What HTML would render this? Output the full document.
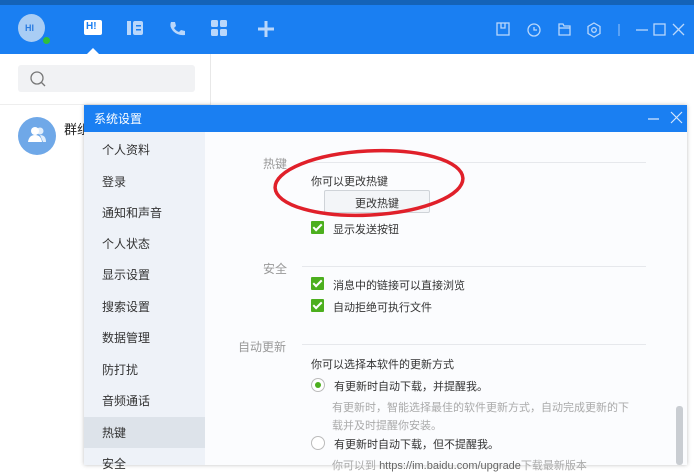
<!DOCTYPE html><html><head><meta charset="utf-8"><style>
*{margin:0;padding:0;box-sizing:border-box}
body{width:694px;height:465px;overflow:hidden;position:relative;background:#fff;font-family:"Liberation Sans","Noto Sans CJK SC",sans-serif;font-size:12px;color:#333}
.a{position:absolute}
.t{position:absolute;white-space:nowrap}
.c .t{font-size:11px}
.side div{position:absolute;left:18px;font-size:12px;color:#333}
.cb{position:absolute;width:13px;height:13px;background:#4caf1e;border-radius:1px}
.cb:after{content:"";position:absolute;left:4px;top:1px;width:3px;height:7px;border:solid #fff;border-width:0 2px 2px 0;transform:rotate(45deg)}
.sec{position:absolute;color:#999;font-size:12px}
.ln{position:absolute;height:1px;background:#e6e8ec}
</style></head><body>
<div class="a" style="left:0;top:0;width:694px;height:5px;background:#1463b8"></div>
<div class="a" style="left:0;top:5px;width:694px;height:49px;background:#1a7ff2"></div>
<div class="a" style="left:18px;top:14px;width:27px;height:28px;border-radius:50%;background:#a9cdf4"></div>
<div class="t" style="left:25px;top:23px;font-size:9px;font-weight:bold;color:#2a7be0">HI</div>
<div class="a" style="left:42px;top:36px;width:9px;height:9px;border-radius:50%;background:#2fbf3a;border:1.5px solid #1a7ff2"></div>
<div class="a" style="left:84px;top:20px;width:18px;height:15px;background:#fff;border-radius:2px"></div>
<div class="t" style="left:86px;top:21px;font-size:10px;font-weight:bold;color:#1a7ff2">H!</div>
<div class="a" style="left:87px;top:42px;width:0;height:0;border:6px solid transparent;border-bottom-color:#fff"></div>
<svg class="a" style="left:126px;top:20px" width="18" height="16"><rect x="1" y="1" width="4" height="14" fill="#b9d7fb"/><rect x="7" y="1" width="10" height="14" rx="2" fill="#b9d7fb"/><rect x="10" y="5" width="5" height="1.5" fill="#1a7ff2"/><rect x="10" y="9" width="5" height="1.5" fill="#1a7ff2"/></svg>
<svg class="a" style="left:168px;top:20px" width="18" height="18"><path d="M3 2 L7 2 L8 6 L6 8 Q8 11 11 12 L13 10 L17 11 L17 15 Q10 16 5 11 Q1 6 3 2Z" fill="#b9d7fb"/></svg>
<svg class="a" style="left:211px;top:20px" width="17" height="17"><rect x="0" y="0" width="7" height="7" rx="1.5" fill="#b9d7fb"/><rect x="9" y="0" width="7" height="7" rx="1.5" fill="#b9d7fb"/><rect x="0" y="9" width="7" height="7" rx="1.5" fill="#b9d7fb"/><rect x="9" y="9" width="7" height="7" rx="1.5" fill="#b9d7fb"/></svg>
<svg class="a" style="left:258px;top:21px" width="16" height="16"><rect x="6.5" y="0" width="3" height="16" fill="#b9d7fb"/><rect x="0" y="6.5" width="16" height="3" fill="#b9d7fb"/></svg>
<svg class="a" style="left:496px;top:22px" width="190" height="16" fill="none" stroke="#b9d7fb" stroke-width="1.3">
<rect x="1" y="1" width="12" height="12"/><path d="M5 1v5h4V1"/>
<circle cx="38" cy="8" r="6"/><path d="M38 5v3h3"/>
<path d="M63 2h4l1 2h6v9H63z"/><path d="M63 6h11"/>
<path d="M98 1l6 3.5v7L98 15l-6-3.5v-7z"/><circle cx="98" cy="8" r="2.3"/>
<path d="M123 2v12" stroke-width="0.8"/>
<path d="M140 8h12"/><rect x="158" y="2" width="11" height="11"/><path d="M177 2l11 11M188 2l-11 11"/>
</svg>
<div class="a" style="left:18px;top:65px;width:177px;height:27px;background:#f1f2f4;border-radius:3px"></div>
<svg class="a" style="left:29px;top:70px" width="18" height="18" fill="none" stroke="#777" stroke-width="1.3"><circle cx="8" cy="8" r="6"/><path d="M12.5 12.5l3.5 3.5"/></svg>
<div class="a" style="left:210px;top:54px;width:1px;height:52px;background:#e8e8e8"></div>
<div class="a" style="left:0;top:104px;width:210px;height:1px;background:#eee"></div>
<div class="a" style="left:18px;top:117px;width:38px;height:38px;border-radius:50%;background:#6fa8e8"></div>
<svg class="a" style="left:26px;top:126px" width="22" height="18" fill="#fff"><circle cx="9" cy="5" r="4"/><path d="M2 16q1-7 7-7t7 7z"/><circle cx="14" cy="5" r="3.5" opacity=".8"/><path d="M14 9q6 0 6 7h-3z" opacity=".8"/></svg>
<div class="t" style="left:64px;top:119px;font-size:13px;color:#222">群组</div>
<div class="a" style="left:84px;top:105px;width:603px;height:360px;background:#fbfcfe;box-shadow:0 0 4px rgba(0,0,0,.25)"></div>
<div class="a" style="left:84px;top:105px;width:603px;height:27px;background:#1a7ff2"></div>
<div class="t" style="left:94px;top:110px;font-size:12px;color:#fff">系统设置</div>
<svg class="a" style="left:645px;top:110px" width="40" height="16" fill="none" stroke="#d6e7fd" stroke-width="1.2"><path d="M3 9h11M26 2l11 11M37 2l-11 11"/></svg>
<div class="a side" style="left:84px;top:132px;width:121px;height:333px;background:#eef2f8">
<div style="top:9px">个人资料</div><div style="top:41px">登录</div><div style="top:72px">通知和声音</div><div style="top:103px">个人状态</div><div style="top:134px">显示设置</div><div style="top:166px">搜索设置</div><div style="top:197px">数据管理</div><div style="top:229px">防打扰</div><div style="top:260px">音频通话</div>
<div style="left:0;top:285px;width:121px;height:31px;background:#dde3ea"></div>
<div style="top:292px">热键</div><div style="top:323px">安全</div>
</div>
<div class="c">
<div class="sec" style="left:263px;top:155px">热键</div><div class="ln" style="left:302px;top:162px;width:344px"></div>
<div class="t" style="left:311px;top:173px">你可以更改热键</div>
<div class="a" style="left:324px;top:190px;width:106px;height:23px;border:1px solid #cfd3d8;border-radius:2px;background:#f3f5f8"></div>
<div class="t" style="left:355px;top:195px">更改热键</div>
<div class="cb" style="left:311px;top:221px"></div><div class="t" style="left:333px;top:221px">显示发送按钮</div>
<div class="sec" style="left:263px;top:260px">安全</div><div class="ln" style="left:302px;top:266px;width:344px"></div>
<div class="cb" style="left:311px;top:277px"></div><div class="t" style="left:333px;top:277px">消息中的链接可以直接浏览</div>
<div class="cb" style="left:311px;top:299px"></div><div class="t" style="left:333px;top:299px">自动拒绝可执行文件</div>
<div class="sec" style="left:238px;top:338px">自动更新</div><div class="ln" style="left:302px;top:344px;width:344px"></div>
<div class="t" style="left:311px;top:356px">你可以选择本软件的更新方式</div>
<div class="a" style="left:311px;top:378px;width:14px;height:14px;border:1px solid #bbb;border-radius:50%;background:#fff"></div>
<div class="a" style="left:315px;top:382px;width:6px;height:6px;border-radius:50%;background:#4caf1e"></div>
<div class="t" style="left:334px;top:378px">有更新时自动下载，并提醒我。</div>
<div class="t" style="left:332px;top:399px;color:#aaa">有更新时，智能选择最佳的软件更新方式，自动完成更新的下</div>
<div class="t" style="left:332px;top:417px;color:#aaa">载并及时提醒你安装。</div>
<div class="a" style="left:311px;top:436px;width:14px;height:14px;border:1px solid #bbb;border-radius:50%;background:#fff"></div>
<div class="t" style="left:334px;top:436px">有更新时自动下载，但不提醒我。</div>
<div class="t" style="left:332px;top:457px;color:#aaa">你可以到 <span style="color:#666">https://im.baidu.com/upgrade</span>下载最新版本</div>
</div>
<div class="a" style="left:676px;top:406px;width:7px;height:59px;background:#c9cdd2;border-radius:3px"></div>
<svg class="a" style="left:270px;top:145px" width="200" height="80"><ellipse cx="99" cy="38" rx="94" ry="32" fill="none" stroke="#e0202a" stroke-width="3.5" transform="rotate(-3 99 38)"/></svg>
</body></html>
